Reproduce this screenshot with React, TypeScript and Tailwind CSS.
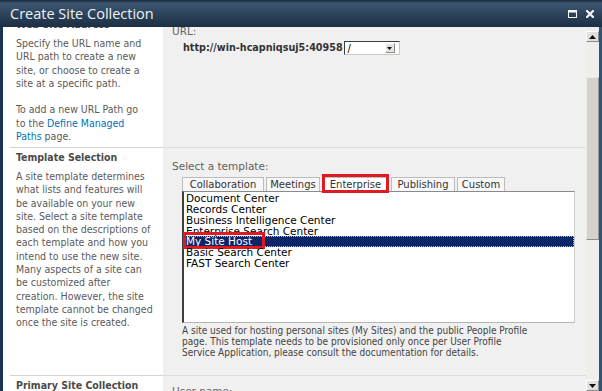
import React from "react";

const condensed = "font-['DejaVu_Sans_Condensed','DejaVu_Sans',sans-serif]";
const verdana = "font-['DejaVu_Sans','Verdana',sans-serif]";

function ScrollArrow({ up }: { up: boolean }) {
  return (
    <svg width="7" height="4" viewBox="0 0 7 4">
      <path d={up ? "M3.5 0L7 4H0Z" : "M0 0H7L3.5 4Z"} fill="#111" />
    </svg>
  );
}

function ScrollButton({ up }: { up: boolean }) {
  return (
    <div className="h-[11px] shrink-0 flex items-center justify-center bg-[#e2e0db] border border-t-white border-l-white border-r-[#8c8c8c] border-b-[#8c8c8c]">
      <ScrollArrow up={up} />
    </div>
  );
}

function Row({
  height,
  left,
  right,
}: {
  height: string;
  left: React.ReactNode;
  right: React.ReactNode;
}) {
  return (
    <div className={`flex ${height}`}>
      <div className="w-[160px] shrink-0 bg-white pl-[7px]">
        <div className="h-full border-t border-[#d4d4d4] pl-[6px] pt-[4px] overflow-hidden">{left}</div>
      </div>
      <div className="flex-1 min-w-0 bg-[#f0f0f0] border-t border-[#dddddd] pl-[9px] pr-[11px]">
        {right}
      </div>
    </div>
  );
}

const templates = [
  "Document Center",
  "Records Center",
  "Business Intelligence Center",
  "Enterprise Search Center",
  "My Site Host",
  "Basic Search Center",
  "FAST Search Center",
];

const tabs: { label: string; w: string }[] = [
  { label: "Collaboration", w: "w-[82px]" },
  { label: "Meetings", w: "w-[54px]" },
  { label: "Enterprise", w: "w-[67px]" },
  { label: "Publishing", w: "w-[64px]" },
  { label: "Custom", w: "w-[48px]" },
];

export default function App() {
  return (
    <div className="w-[602px] h-[391px] overflow-hidden flex flex-col bg-[#1f3a5a]">
      {/* Title bar */}
      <div className="h-[27px] shrink-0 flex items-center pl-[10px] pr-[8px] bg-[linear-gradient(to_bottom,#17293d,#3e5670_12%,#2b4259_55%,#1c2f44)]">
        <span className="text-[14.5px] leading-[18px] text-[#eef2f6] font-['Open_Sans','Noto_Sans',sans-serif] pt-[1px]">
          Create Site Collection
        </span>
        <div className="ml-auto flex items-center gap-[9px]">
          <svg width="9" height="8" viewBox="0 0 9 8">
            <rect x="0.5" y="0.5" width="8" height="7" fill="none" stroke="#f4f6f8" strokeWidth="1" />
            <rect x="0" y="0" width="9" height="2.5" fill="#f4f6f8" />
          </svg>
          <svg width="8" height="8" viewBox="0 0 8 8">
            <path d="M1 1L7 7M7 1L1 7" stroke="#f4f6f8" strokeWidth="2.2" strokeLinecap="square" />
          </svg>
        </div>
      </div>

      {/* Body */}
      <div className="flex-1 min-h-0 flex border-l-[3px] border-l-[#1c3452] border-r-[3px] border-r-[#2a5580]">
        <div className="flex-1 min-w-0 overflow-hidden">
          <div className="-mt-[13px]">
            {/* Web Site Address */}
            <Row
              height="h-[133px]"
              left={
                <div className={`${condensed} text-[10.5px] leading-[13.3px] text-[#5a5a5a]`}>
                  <div className="font-bold text-[#4a4a4a] leading-[11px]">Web Site Address</div>
                  <p className="mt-[7px]">
                    Specify the URL name and
                    <br />
                    URL path to create a new
                    <br />
                    site, or choose to create a
                    <br />
                    site at a specific path.
                  </p>
                  <p className="mt-[13.3px]">
                    To add a new URL Path go
                    <br />
                    to the <span className="text-[#0072bc]">Define Managed</span>
                    <br />
                    <span className="text-[#0072bc]">Paths</span> page.
                  </p>
                </div>
              }
              right={
                <div className="pt-[11px]">
                  <div className={`${verdana} text-[10.5px] leading-[11px] text-[#666666]`}>URL:</div>
                  <div className="mt-[4px] ml-[11px] flex items-center h-[14px]">
                    <span className={`${condensed} font-bold text-[10.7px] leading-[14px] text-[#333333]`}>
                      http://win-hcapniqsuj5:40958
                    </span>
                    <div className="ml-[1px] w-[56px] h-[14px] bg-white flex items-center border border-l-[#3c3c3c] border-t-[#3c3c3c] border-r-[#c8c8c8] border-b-[#c8c8c8]">
                      <span className={`${verdana} flex-1 pl-[3px] text-[10px] leading-[11px] text-black`}>/</span>
                      <div className="w-[10px] h-[10px] mr-[4px] flex items-center justify-center bg-[#e6e4df] border border-t-white border-l-white border-r-[#8c8c8c] border-b-[#8c8c8c]">
                        <svg width="5" height="3" viewBox="0 0 5 3">
                          <path d="M0 0H5L2.5 3Z" fill="#111" />
                        </svg>
                      </div>
                    </div>
                  </div>
                </div>
              }
            />

            {/* Template Selection */}
            <Row
              height="h-[228px]"
              left={
                <div className={`${condensed} text-[10.5px] leading-[13.3px] text-[#5a5a5a]`}>
                  <div className="font-bold text-[#4a4a4a] leading-[11px]">Template Selection</div>
                  <p className="mt-[7px]">
                    A site template determines
                    <br />
                    what lists and features will
                    <br />
                    be available on your new
                    <br />
                    site. Select a site template
                    <br />
                    based on the descriptions of
                    <br />
                    each template and how you
                    <br />
                    intend to use the new site.
                    <br />
                    Many aspects of a site can
                    <br />
                    be customized after
                    <br />
                    creation. However, the site
                    <br />
                    template cannot be changed
                    <br />
                    once the site is created.
                  </p>
                </div>
              }
              right={
                <div className="pt-[13px]">
                  <div className={`${verdana} text-[10.5px] leading-[11px] text-[#5f5f5f]`}>Select a template:</div>
                  <div className="ml-[10px]">
                    <div className="mt-[5px] flex gap-[2px] h-[14px]">
                      {tabs.map((t) => (
                        <div
                          key={t.label}
                          className={`relative ${t.w} text-center border border-b-0 border-[#bcbcbc] ${verdana} text-[10px] leading-[13px] text-[#333333] ${
                            t.label === "Enterprise" ? "bg-white" : "bg-[#f7f7f7]"
                          }`}
                        >
                          {t.label}
                          {t.label === "Enterprise" && (
                            <span className="absolute -left-[1px] -right-[1px] -top-[4px] -bottom-[2px] border-[3px] border-[#df1a21]" />
                          )}
                        </div>
                      ))}
                    </div>
                    <div className="h-[132px] bg-white border border-l-[2px] border-l-[#3e3e3e] border-t-[#8a8a8a] border-r-[#cfcfcf] border-b-[#b5b5b5] pt-[1px]">
                      {templates.map((t) => {
                        const sel = t === "My Site Host";
                        return (
                          <div
                            key={t}
                            className={`relative h-[10.85px] pl-[2px] ${verdana} text-[10.5px] leading-[10.85px] whitespace-nowrap ${
                              sel
                                ? "bg-[#0b2566] text-white outline-1 outline-dotted outline-[#a8b4d4] -outline-offset-1"
                                : "text-black"
                            }`}
                          >
                            {t}
                            {sel && (
                              <span className="absolute -left-[1px] -top-[4px] w-[82px] h-[17px] border-[3px] border-[#df1a21]" />
                            )}
                          </div>
                        );
                      })}
                    </div>
                    <p className={`mt-[2px] ${condensed} text-[10px] leading-[11px] text-[#444444]`}>
                      A site used for hosting personal sites (My Sites) and the public People Profile
                      <br />
                      page. This template needs to be provisioned only once per User Profile
                      <br />
                      Service Application, please consult the documentation for details.
                    </p>
                  </div>
                </div>
              }
            />

            {/* Primary Site Collection Administrator */}
            <Row
              height="h-[60px]"
              left={
                <div className={`${condensed} text-[10.5px] leading-[11px] font-bold text-[#4a4a4a]`}>
                  Primary Site Collection Administrator
                </div>
              }
              right={
                <div className={`pt-[10px] ${verdana} text-[10.5px] leading-[11px] text-[#666666]`}>User name:</div>
              }
            />
          </div>
        </div>

        {/* Scrollbar */}
        <div className="w-[13px] shrink-0 flex flex-col bg-[#efeeeb] pt-[4px]">
          <ScrollButton up />
          <div className="flex-1 min-h-0 flex flex-col">
            <div className="mt-[35px] h-[163px] shrink-0 bg-[#d5d2cc] border border-t-[#ecebe8] border-l-[#ecebe8] border-r-[#9a9893] border-b-[#8e8c87]" />
          </div>
          <ScrollButton up={false} />
        </div>
      </div>
    </div>
  );
}
